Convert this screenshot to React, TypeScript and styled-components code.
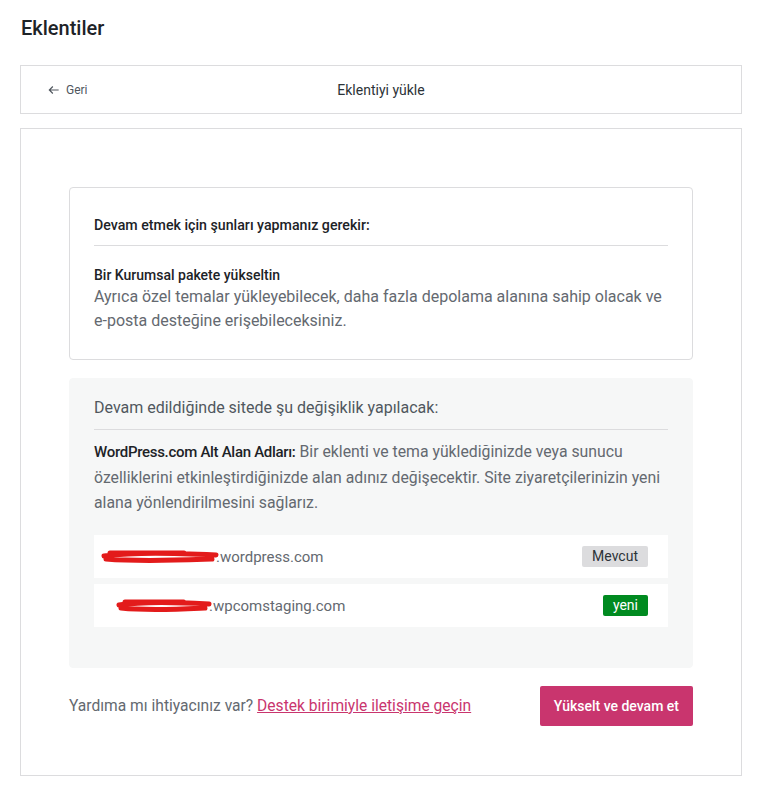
import styled, { createGlobalStyle } from 'styled-components';

const GlobalStyle = createGlobalStyle`
  body {
    margin: 0;
    background: #ffffff;
    font-family: Roboto, "Noto Sans", sans-serif;
    color: #1d2327;
  }
`;

const Page = styled.div`
  padding: 15px 21px 32px 20px;
`;

const Title = styled.h1`
  margin: 0 0 24px 1px;
  font-size: 20px;
  font-weight: 500;
  line-height: 26px;
  color: #1d2327;
`;

const HeaderCard = styled.div`
  display: grid;
  grid-template-columns: 1fr auto 1fr;
  align-items: center;
  height: 47px;
  padding: 0 26px;
  border: 1px solid #dcdcde;
  margin-bottom: 14px;
`;

const BackLink = styled.a`
  display: flex;
  align-items: center;
  gap: 5px;
  font-size: 12px;
  color: #50575e;
  text-decoration: none;
`;

const HeaderTitle = styled.div`
  font-size: 14px;
  color: #2c3338;
`;

const MainCard = styled.div`
  border: 1px solid #dcdcde;
  padding: 58px 48px 49px;
  display: flex;
  flex-direction: column;
`;

const Box = styled.div<{ $muted?: boolean }>`
  border-radius: 4px;
  padding: ${p => (p.$muted ? '17px 24px 40px' : '27px 24px 26px')};
  background: ${p => (p.$muted ? '#f6f7f7' : '#ffffff')};
  border: 1px solid ${p => (p.$muted ? '#f6f7f7' : '#dcdcde')};
  margin-bottom: 18px;
`;

const BoxHeading = styled.div<{ $large?: boolean }>`
  font-size: ${p => (p.$large ? '16px' : '14.2px')};
  font-weight: ${p => (p.$large ? 400 : 500)};
  color: ${p => (p.$large ? '#50575e' : '#1d2327')};
  line-height: ${p => (p.$large ? '24px' : '20px')};
  padding-bottom: ${p => (p.$large ? '9px' : '10px')};
  border-bottom: 1px solid #dcdcde;
`;

const ItemTitle = styled.div`
  margin-top: 19px;
  font-size: 14px;
  font-weight: 500;
  line-height: 20px;
  color: #1d2327;
`;

const Description = styled.p`
  margin: 0;
  font-size: 16px;
  line-height: 24px;
  color: #646970;
`;

const Paragraph = styled.p`
  margin: 9px 0 20px;
  font-size: 15.8px;
  line-height: 25px;
  color: #646970;

  strong {
    font-size: 15px;
    font-weight: 500;
    letter-spacing: -0.3px;
    color: #1d2327;
  }
`;

const DomainList = styled.div`
  display: flex;
  flex-direction: column;
  gap: 6px;
`;

const DomainRow = styled.div<{ $indent: number }>`
  display: flex;
  align-items: center;
  justify-content: space-between;
  height: 43px;
  background: #ffffff;
  padding: 0 20px 0 ${p => p.$indent}px;
`;

const DomainName = styled.div`
  display: flex;
  align-items: center;
  font-size: 15px;
  color: #646970;
`;

const Redaction = styled.svg`
  display: block;
  margin-right: -4px;
`;

const Badge = styled.span<{ $tone: 'neutral' | 'success' }>`
  font-size: 14px;
  line-height: 21px;
  padding: 0 10px;
  border-radius: 2px;
  background: ${p => (p.$tone === 'success' ? '#008a20' : '#dcdcde')};
  color: ${p => (p.$tone === 'success' ? '#ffffff' : '#2c3338')};
`;

const Footer = styled.div`
  display: flex;
  align-items: center;
  justify-content: space-between;
`;

const HelpText = styled.div`
  font-size: 15.6px;
  color: #646970;

  a {
    color: #c9356e;
    text-decoration: underline;
  }
`;

const PrimaryButton = styled.button`
  height: 40px;
  padding: 0 14px;
  border: none;
  border-radius: 2px;
  background: #c9356e;
  color: #ffffff;
  font-family: inherit;
  font-size: 14px;
  font-weight: 500;
  cursor: pointer;
`;

function ArrowLeft() {
  return (
    <svg width="14" height="14" viewBox="0 0 24 24" fill="none" stroke="#50575e" strokeWidth="2">
      <path d="M20 12H4M10 6l-6 6 6 6" />
    </svg>
  );
}

// red marker strokes hiding the site name
function Scribble({ width }: { width: number }) {
  return (
    <Redaction width={width} height="20" viewBox={`0 0 ${width} 20`}>
      <path
        d={`M4 9 C ${width * 0.3} 5, ${width * 0.6} 6, ${width - 4} 8 M6 12 C ${width * 0.35} 15, ${width * 0.7} 13, ${width - 8} 12 M10 6 L ${width * 0.7} 6`}
        stroke="#e31b1b"
        strokeWidth="5"
        strokeLinecap="round"
        fill="none"
      />
    </Redaction>
  );
}

export default function App() {
  return (
    <>
      <GlobalStyle />
      <Page>
        <Title>Eklentiler</Title>
        <HeaderCard>
          <BackLink href="#">
            <ArrowLeft />
            Geri
          </BackLink>
          <HeaderTitle>Eklentiyi yükle</HeaderTitle>
          <div />
        </HeaderCard>
        <MainCard>
          <Box>
            <BoxHeading>Devam etmek için şunları yapmanız gerekir:</BoxHeading>
            <ItemTitle>Bir Kurumsal pakete yükseltin</ItemTitle>
            <Description>
              Ayrıca özel temalar yükleyebilecek, daha fazla depolama alanına sahip olacak ve
              <br />
              e-posta desteğine erişebileceksiniz.
            </Description>
          </Box>
          <Box $muted>
            <BoxHeading $large>Devam edildiğinde sitede şu değişiklik yapılacak:</BoxHeading>
            <Paragraph>
              <strong>WordPress.com Alt Alan Adları:</strong> Bir eklenti ve tema yüklediğinizde veya sunucu
              <br />
              özelliklerini etkinleştirdiğinizde alan adınız değişecektir. Site ziyaretçilerinizin yeni
              <br />
              alana yönlendirilmesini sağlarız.
            </Paragraph>
            <DomainList>
              <DomainRow $indent={6}>
                <DomainName>
                  <Scribble width={120} />
                  .wordpress.com
                </DomainName>
                <Badge $tone="neutral">Mevcut</Badge>
              </DomainRow>
              <DomainRow $indent={21}>
                <DomainName>
                  <Scribble width={98} />
                  .wpcomstaging.com
                </DomainName>
                <Badge $tone="success">yeni</Badge>
              </DomainRow>
            </DomainList>
          </Box>
          <Footer>
            <HelpText>
              Yardıma mı ihtiyacınız var? <a href="#">Destek birimiyle iletişime geçin</a>
            </HelpText>
            <PrimaryButton>Yükselt ve devam et</PrimaryButton>
          </Footer>
        </MainCard>
      </Page>
    </>
  );
}
